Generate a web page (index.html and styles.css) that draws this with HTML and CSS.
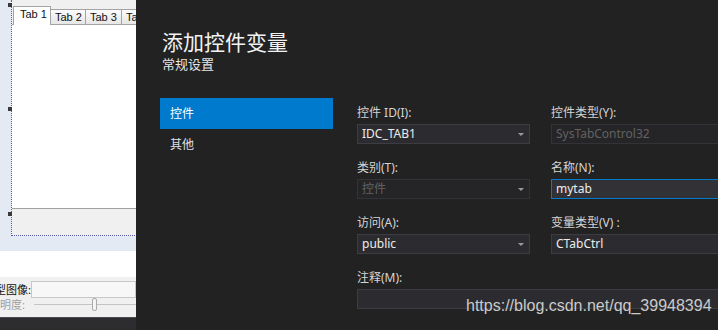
FILE: index.html
```html
<!DOCTYPE html>
<html>
<head>
    <title>添加控件变量</title>
    <link rel="stylesheet" href="styles.css">
</head>
<body>
    <div class="screen">
        <div class="designer">
            <div class="canvas">
                <div class="frame">
                    <div class="tabs">
                        <span class="tab active">Tab 1</span>
                        <span class="tab">Tab 2</span>
                        <span class="tab">Tab 3</span>
                        <span class="tab">Tab 4</span>
                    </div>
                    <div class="pane"></div>
                </div>
                <span class="handle handle-top"></span>
                <span class="handle handle-mid"></span>
                <span class="handle handle-bottom"></span>
            </div>
            <div class="blank"></div>
            <div class="props">
                <div class="prop-row">
                    <span class="prop-label">型图像:</span>
                    <span class="prop-box"></span>
                </div>
                <div class="prop-row disabled">
                    <span class="prop-label">明度:</span>
                    <span class="slider"><span class="thumb"></span></span>
                </div>
            </div>
            <div class="statusbar"></div>
        </div>

        <div class="dialog">
            <h1>添加控件变量</h1>
            <h2>常规设置</h2>
            <div class="dialog-body">
                <ul class="nav">
                    <li class="active">控件</li>
                    <li>其他</li>
                </ul>
                <div class="form">
                    <div class="field">
                        <div class="label">控件 ID(I):</div>
                        <div class="input select">IDC_TAB1</div>
                    </div>
                    <div class="field">
                        <div class="label">控件类型(Y):</div>
                        <div class="input disabled">SysTabControl32</div>
                    </div>
                    <div class="field">
                        <div class="label">类别(T):</div>
                        <div class="input select disabled">控件</div>
                    </div>
                    <div class="field">
                        <div class="label">名称(N):</div>
                        <div class="input focused">mytab</div>
                    </div>
                    <div class="field">
                        <div class="label">访问(A):</div>
                        <div class="input select">public</div>
                    </div>
                    <div class="field">
                        <div class="label">变量类型(V) :</div>
                        <div class="input">CTabCtrl</div>
                    </div>
                    <div class="field wide">
                        <div class="label">注释(M):</div>
                        <div class="input"></div>
                    </div>
                </div>
            </div>
        </div>
    </div>

    <div class="watermark">https://blog.csdn.net/qq_39948394</div>
</body>
</html>
```
FILE: styles.css
```css
body {
    margin: 0;
    width: 718px;
    height: 330px;
    overflow: hidden;
    position: relative;
    font-family: "Noto Sans", "Noto Sans CJK SC", sans-serif;
}
.screen {
    display: flex;
    height: 330px;
}

/* resource designer on the left */
.designer {
    width: 136px;
    display: flex;
    flex-direction: column;
    overflow: hidden;
    background: #f0f0f0;
}
.canvas {
    position: relative;
    height: 251px;
    padding-left: 11px;
    background: #e3eaf3;
}
.frame {
    height: 236px;
    width: 140px;
    box-sizing: border-box;
    border-left: 1px dotted #5a5aa8;
    border-bottom: 1px dotted #5a5aa8;
    background: #f0f0f0;
}
.tabs {
    display: flex;
    align-items: flex-end;
    height: 24px;
    padding-left: 1px;
}
.tab {
    width: 35px;
    height: 15px;
    flex-shrink: 0;
    box-sizing: border-box;
    border: 1px solid #a3a3a3;
    border-bottom: none;
    border-left: none;
    background: linear-gradient(#fbfbfb, #e6e6e6);
    font-family: "Liberation Sans", sans-serif;
    font-size: 11px;
    line-height: 15px;
    padding-left: 4px;
    color: #111;
}
.tab.active {
    width: 38px;
    height: 19px;
    margin-bottom: -1px;
    border-left: 1px solid #a3a3a3;
    background: #fff;
    position: relative;
    padding-left: 6px;
    line-height: 15px;
}
.tab:nth-child(3) {
    width: 36px;
}
.pane {
    height: 185px;
    background: #fff;
    border-top: 1px solid #a3a3a3;
    border-bottom: 1px solid #a0a0a0;
    box-sizing: border-box;
}
.handle {
    position: absolute;
    left: 8px;
    width: 4px;
    height: 4px;
    background: #3a3a3a;
}
.handle-top { top: 3px; }
.handle-mid { top: 107px; }
.handle-bottom { top: 212px; }

.blank {
    height: 26px;
    background: #fff;
}
.props {
    height: 40px;
    padding-top: 4px;
    box-sizing: border-box;
    background: #f0f0f0;
}
.prop-row {
    display: flex;
    align-items: center;
    height: 16px;
    font-size: 11px;
    color: #111;
}
.prop-label {
    width: 31px;
    flex-shrink: 0;
    display: flex;
    justify-content: flex-end;
    overflow: hidden;
    white-space: nowrap;
    line-height: 15px;
}
.prop-box {
    flex: 1;
    height: 15px;
    border: 1px solid #c8c8c8;
    background: #f7f7f7;
}
.prop-row.disabled {
    height: 14px;
    color: #a0a0a0;
}
.prop-row.disabled .prop-label {
    width: 25px;
    line-height: 13px;
}
.slider {
    flex: 1;
    height: 1px;
    margin-left: 9px;
    position: relative;
    background: #c4c4c4;
}
.thumb {
    position: absolute;
    left: 58px;
    top: -6px;
    width: 3px;
    height: 11px;
    border: 1px solid #aaa;
    border-radius: 2px;
    background: #f4f4f4;
}
.statusbar {
    flex: 1;
    background: #2d2d30;
    border-top: 1px solid #4a4a4f;
}

/* dark dialog */
.dialog {
    flex: 1;
    background: #222223;
    color: #d6d6d6;
    padding: 30px 0 0 24px;
    overflow: hidden;
}
.dialog h1 {
    margin: 0 0 0 2px;
    font-size: 21px;
    line-height: 24px;
    font-weight: normal;
    color: #f2f2f2;
}
.dialog h2 {
    margin: 2px 0 0 2px;
    font-size: 13px;
    line-height: 16px;
    font-weight: normal;
    color: #e6e6e6;
}
.dialog-body {
    display: flex;
    gap: 24px;
    margin-top: 26px;
}
.nav {
    width: 173px;
    flex-shrink: 0;
    list-style: none;
    margin: 0;
    padding: 0;
}
.nav li {
    height: 31px;
    line-height: 31px;
    padding-left: 10px;
    font-size: 12px;
    color: #e0e0e0;
}
.nav li.active {
    background: #007acc;
    color: #fff;
}
.form {
    margin-top: 7px;
    display: grid;
    grid-template-columns: 173px 173px;
    column-gap: 21px;
    row-gap: 16px;
}
.field.wide {
    grid-column: 1 / -1;
}
.label {
    font-size: 12px;
    line-height: 16px;
    margin-bottom: 3px;
    color: #d4d4d4;
    white-space: nowrap;
}
.input {
    position: relative;
    height: 20px;
    box-sizing: border-box;
    border: 1px solid #3c3c42;
    background: #2c2c30;
    padding: 0 4px;
    font-size: 12px;
    line-height: 18px;
    color: #ececec;
}
.input.select::after {
    content: "";
    position: absolute;
    right: 5px;
    top: 8px;
    border-left: 3px solid transparent;
    border-right: 3px solid transparent;
    border-top: 3px solid #9a9a9a;
}
.input.disabled {
    background: #252527;
    border-color: #333337;
    color: #626262;
}
.input.focused {
    border-color: #007acc;
    background: #323236;
}

.watermark {
    position: absolute;
    left: 466px;
    top: 296px;
    font-family: "Liberation Sans", sans-serif;
    font-size: 16px;
    line-height: 20px;
    color: #cacaca;
}
```
